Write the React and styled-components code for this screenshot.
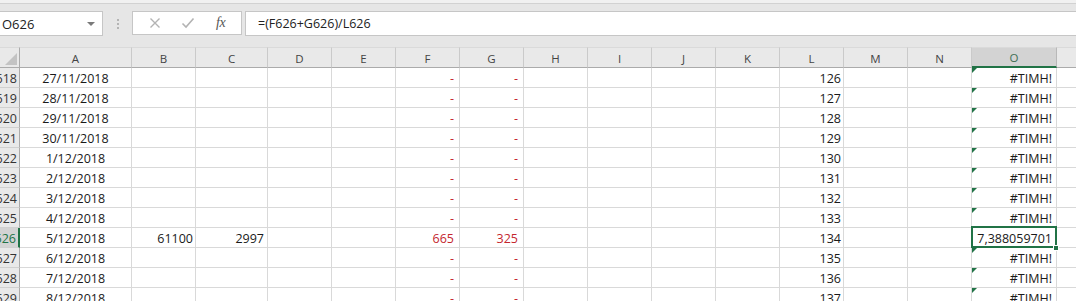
import React from 'react'
import styled, { createGlobalStyle } from 'styled-components'

const GREEN = '#217346'
const GRID = '#d9d9d9'
const COLS = [20, 112, 64, 72, 64, 64, 64, 64, 64, 64, 64, 64, 64, 64, 64, 85, 64]
const TEMPLATE = COLS.map((w) => w + 'px').join(' ')
// P is past the right edge of the window, so its header stays blank
const LETTERS = ['A', 'B', 'C', 'D', 'E', 'F', 'G', 'H', 'I', 'J', 'K', 'L', 'M', 'N', 'O', '']

const GlobalStyle = createGlobalStyle`
    html, body {
        margin: 0;
        padding: 0;
        background: #ffffff;
        overflow: hidden;
    }
    * { box-sizing: border-box; }
`

const Window = styled.div`
    width: 1076px;
    height: 301px;
    overflow: hidden;
    background: #e6e6e6;
    font-family: "Open Sans", "Noto Sans", sans-serif;
`

const TopStrip = styled.div`
    height: 4px;
    background: #f1f1f1;
    border-bottom: 1px solid #d2d2d2;
`

const FormulaBar = styled.div`
    display: flex;
    align-items: flex-start;
    height: 43px;
    padding-top: 7px;
`

const NameBox = styled.div`
    width: 103px;
    height: 25px;
    background: #ffffff;
    border: 1px solid #c6c6c6;
    border-left: none;
    display: flex;
    align-items: center;
    justify-content: space-between;
    padding: 0 7px 0 2px;
    font-size: 13px;
    color: #222;
`

const DropArrow = styled.span`
    width: 0;
    height: 0;
    border-left: 4px solid transparent;
    border-right: 4px solid transparent;
    border-top: 4px solid #7a7a7a;
`

const Grip = styled.div`
    width: 29px;
    height: 25px;
    display: flex;
    flex-direction: column;
    align-items: center;
    justify-content: center;
    gap: 2px;
`

const GripDot = styled.span`
    width: 2px;
    height: 2px;
    background: #b4b4b4;
`

const ButtonGroup = styled.div`
    width: 110px;
    height: 24px;
    background: #ffffff;
    border: 1px solid #c6c6c6;
    display: flex;
    align-items: center;
    justify-content: space-around;
    padding: 0 4px 0 6px;
    margin-right: 3px;
`

const BarButton = styled.span`
    width: 26px;
    display: flex;
    justify-content: center;
    align-items: center;
`

const Fx = styled.span`
    font-family: "Liberation Serif", serif;
    font-style: italic;
    font-size: 14px;
    color: #555;
    letter-spacing: -0.5px;
`

const FormulaInput = styled.div`
    flex: 1;
    height: 25px;
    background: #ffffff;
    border: 1px solid #c6c6c6;
    border-right: none;
    display: flex;
    align-items: center;
    padding-left: 12px;
    font-size: 12.5px;
    color: #222;
`

const Sheet = styled.div`
    background: #ffffff;
`

const Row = styled.div`
    display: grid;
    grid-template-columns: ${TEMPLATE};
    height: ${(p) => (p.$header ? 21 : 20)}px;
`

const ColHeader = styled.div`
    background: ${(p) => (p.$active ? '#d3d3d3' : '#e9e9e9')};
    border-right: 1px solid ${(p) => (p.$active ? '#b8b8b8' : '#cacaca')};
    border-bottom: ${(p) => (p.$active ? `2px solid ${GREEN}` : '1px solid #ababab')};
    border-top: 1px solid #dadada;
    display: flex;
    align-items: center;
    justify-content: center;
    padding-top: 1px;
    font-size: 11.5px;
    color: ${(p) => (p.$active ? '#3f6e53' : '#444')};
`

const Corner = styled.div`
    background: #e9e9e9;
    border-right: 1px solid #ababab;
    border-bottom: 1px solid #ababab;
    border-top: 1px solid #dadada;
    position: relative;
    &::after {
        content: '';
        position: absolute;
        right: 2px;
        bottom: 2px;
        border-left: 12px solid transparent;
        border-bottom: 12px solid #c3c3c3;
    }
`

const RowHeader = styled.div`
    background: ${(p) => (p.$active ? '#d3d3d3' : '#e9e9e9')};
    border-right: ${(p) => (p.$active ? `2px solid ${GREEN}` : '1px solid #ababab')};
    border-bottom: 1px solid #d0d0d0;
    display: flex;
    align-items: center;
    justify-content: flex-end;
    overflow: hidden;
    padding-right: 2px;
    padding-top: 1px;
    font-size: 12.5px;
    color: ${(p) => (p.$active ? GREEN : '#333')};
`

const Cell = styled.div`
    position: relative;
    border-right: 1px solid ${GRID};
    border-bottom: 1px solid ${GRID};
    display: flex;
    align-items: center;
    justify-content: ${(p) => (p.$align === 'center' ? 'center' : 'flex-end')};
    padding: 1px ${(p) => p.$pad || 2}px 0 2px;
    font-size: 12.5px;
    white-space: nowrap;
    color: ${(p) => (p.$red ? '#c4262e' : '#1a1a1a')};
    ${(p) => p.$flag && `
        &::before {
            content: '';
            position: absolute;
            top: 0;
            left: 0;
            border-top: 5px solid ${GREEN};
            border-right: 5px solid transparent;
        }
    `}
    ${(p) => p.$selected && `
        &::after {
            content: '';
            position: absolute;
            top: -2px;
            left: -1px;
            right: -1px;
            bottom: -1px;
            border: 2px solid ${GREEN};
        }
    `}
`

const Handle = styled.span`
    position: absolute;
    right: -3px;
    bottom: -4px;
    width: 6px;
    height: 6px;
    background: ${GREEN};
    border: 1px solid #ffffff;
    z-index: 2;
`

const CancelIcon = () => (
    <svg width="12" height="12" viewBox="0 0 12 12">
        <path d="M1.5 1.5 L10.5 10.5 M10.5 1.5 L1.5 10.5" stroke="#b3b3b3" strokeWidth="1.4" fill="none" />
    </svg>
)

const EnterIcon = () => (
    <svg width="14" height="12" viewBox="0 0 14 12">
        <path d="M1.5 6.5 L5 10 L12.5 1.5" stroke="#b3b3b3" strokeWidth="1.6" fill="none" />
    </svg>
)

const days = [
    '27/11/2018', '28/11/2018', '29/11/2018', '30/11/2018', '1/12/2018', '2/12/2018',
    '3/12/2018', '4/12/2018', '5/12/2018', '6/12/2018', '7/12/2018', '8/12/2018',
]

const rows = days.map((date, i) => {
    const n = 618 + i
    const active = n === 626
    return {
        n,
        date,
        active,
        b: active ? '61100' : '',
        c: active ? '2997' : '',
        f: active ? '665' : '-',
        g: active ? '325' : '-',
        l: String(126 + i),
        o: active ? '7,388059701' : '#TIMH!',
    }
})

const DataRow = ({ row }) => (
    <Row>
        <RowHeader $active={row.active}>{row.n}</RowHeader>
        <Cell $align="center">{row.date}</Cell>
        <Cell>{row.b}</Cell>
        <Cell $pad={3}>{row.c}</Cell>
        <Cell />
        <Cell />
        <Cell $red $pad={5}>{row.f}</Cell>
        <Cell $red $pad={5}>{row.g}</Cell>
        <Cell />
        <Cell />
        <Cell />
        <Cell />
        <Cell>{row.l}</Cell>
        <Cell />
        <Cell />
        <Cell $flag={!row.active} $selected={row.active} $pad={4}>
            {row.o}
            {row.active && <Handle />}
        </Cell>
        <Cell />
    </Row>
)

const App = () => {
    return (
        <Window>
            <GlobalStyle />
            <TopStrip />
            <FormulaBar>
                <NameBox>
                    O626
                    <DropArrow />
                </NameBox>
                <Grip>
                    <GripDot />
                    <GripDot />
                    <GripDot />
                </Grip>
                <ButtonGroup>
                    <BarButton><CancelIcon /></BarButton>
                    <BarButton><EnterIcon /></BarButton>
                    <BarButton><Fx>fx</Fx></BarButton>
                </ButtonGroup>
                <FormulaInput>=(F626+G626)/L626</FormulaInput>
            </FormulaBar>
            <Sheet>
                <Row $header>
                    <Corner />
                    {LETTERS.map((l, i) => (
                        <ColHeader key={i} $active={l === 'O'}>{l}</ColHeader>
                    ))}
                </Row>
                {rows.map((row) => (
                    <DataRow key={row.n} row={row} />
                ))}
            </Sheet>
        </Window>
    )
}

export default App
